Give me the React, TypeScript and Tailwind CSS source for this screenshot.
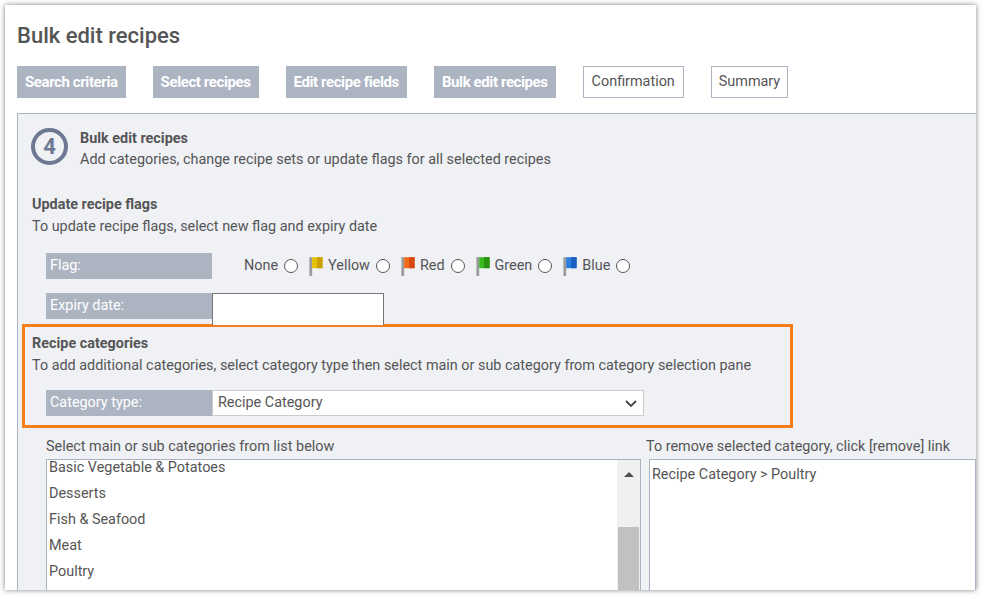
import React from "react";

const Flag = ({ c, d }: { c: string; d: string }) => (
  <svg width="18" height="22" viewBox="0 0 16 20" className="inline-block mr-[3px]">
    <rect x="2" y="2" width="2.5" height="17" fill="#9a9a9a" />
    <path d="M4.5 2 L14 2 L14 12 L4.5 12 Z" fill={c} />
    <path d="M9 2 L14 2 L14 12 L9 12 Z" fill={d} />
  </svg>
);

const Radio = () => (
  <span className="inline-block w-[14px] h-[14px] rounded-full border border-[#555] bg-white ml-[6px] mr-[9px] align-[-1px]" />
);

export default function App() {
  const tabs = ["Search criteria", "Select recipes", "Edit recipe fields", "Bulk edit recipes"];
  return (
    <div className="w-[984px] h-[599px] bg-white overflow-hidden text-[#555] text-[14.4px]" style={{ fontFamily: "Roboto, 'Liberation Sans', sans-serif" }}>
      <div className="ml-[5px] mt-[5px] w-[971px] h-[585px] bg-white shadow-[0_0_5px_rgba(0,0,0,0.5)] overflow-hidden pl-[12px]">
        <div className="text-[22px] font-medium pt-[17px] leading-[28px] text-[#555]">Bulk edit recipes</div>
        <div className="flex gap-[27px] mt-[16px] h-[32px]">
          {tabs.map((t) => (
            <div key={t} className="bg-[#acb4c2] text-white font-bold px-[8px] flex items-center text-[15px] tracking-[-0.4px]">{t}</div>
          ))}
          <div className="border border-[#acb4c2] px-[8px] flex items-center">Confirmation</div>
          <div className="border border-[#acb4c2] px-[7px] flex items-center">Summary</div>
        </div>
        <div className="mt-[15px] bg-[#eff1f5] border border-[#a9b2c3] border-r-0 h-[500px] relative">
          <div className="flex pl-[13px] pt-[14px]">
            <div className="w-[37px] h-[37px] rounded-full border-[4px] border-[#6d7893] flex items-center justify-center text-[#6d7893] font-bold text-[22px]">4</div>
            <div className="ml-[12px]">
              <div className="font-bold leading-[22px]">Bulk edit recipes</div>
              <div className="leading-[20px]">Add categories, change recipe sets or update flags for all selected recipes</div>
            </div>
          </div>
          <div className="pl-[14px] mt-[24px]">
            <div className="font-bold leading-[22px]">Update recipe flags</div>
            <div className="leading-[22px]">To update recipe flags, select new flag and expiry date</div>
          </div>
          <div className="flex items-center mt-[15px] ml-[28px] h-[26px]">
            <div className="w-[166px] h-[26px] bg-[#acb4c2] text-white flex items-center px-[4px]">Flag:</div>
            <div className="ml-[32px] flex items-center">
              None<Radio /><Flag c="#e6c200" d="#c9a000" />Yellow<Radio /><Flag c="#f26a1b" d="#d44a10" />Red<Radio />
              <Flag c="#3cb820" d="#2a9010" />Green<Radio /><Flag c="#2a7de0" d="#1a5fc0" />Blue<Radio />
            </div>
          </div>
          <div className="flex mt-[14px] ml-[28px] h-[32px]">
            <div className="w-[166px] h-[26px] bg-[#acb4c2] text-white flex items-center px-[4px]">Expiry date:</div>
            <div className="w-[172px] h-[32px] bg-white border border-[#777] border-b-0" />
          </div>
          <div className="ml-[4px] w-[771px] h-[104px] border-[3px] border-[#f47f1a] -mt-[1px] pl-[7px] pt-[6px]">
            <div className="font-bold leading-[22px]">Recipe categories</div>
            <div className="leading-[22px]">To add additional categories, select category type then select main or sub category from category selection pane</div>
            <div className="flex mt-[13px] ml-[14px] h-[26px]">
              <div className="w-[166px] h-[26px] bg-[#acb4c2] text-white flex items-center px-[4px]">Category type:</div>
              <div className="w-[432px] h-[26px] bg-white border border-[#ccc] flex items-center justify-between px-[5px]">
                <span>Recipe Category</span>
                <svg width="14" height="14" viewBox="0 0 14 14"><path d="M2 5 L7 10 L12 5" stroke="#444" strokeWidth="1.8" fill="none" /></svg>
              </div>
            </div>
          </div>
          <div className="flex ml-[28px] mt-[10px]">
            <div className="w-[595px]">
              <div className="leading-[18px]">Select main or sub categories from list below</div>
              <div className="mt-[3px] w-[595px] h-[140px] bg-white border border-[#a9b2c3] flex">
                <div className="flex-1 pl-[2px] pt-[1px]">
                  {["Basic Vegetable & Potatoes", "Desserts", "Fish & Seafood", "Meat", "Poultry"].map((s) => (
                    <div key={s} className="h-[26px] leading-[14px]">{s}</div>
                  ))}
                </div>
                <div className="w-[23px] bg-[#f0f0f0] flex flex-col items-center">
                  <svg width="12" height="12" viewBox="0 0 12 12" className="mt-[8px]"><path d="M1 9 L6 4 L11 9 Z" fill="#505050" /></svg>
                  <div className="w-[21px] h-[70px] bg-[#c1c1c1] mt-[47px]" />
                </div>
              </div>
            </div>
            <div className="ml-[5px] flex-1">
              <div className="leading-[18px]">To remove selected category, click [remove] link</div>
              <div className="mt-[3px] h-[140px] bg-white border border-[#a9b2c3] ml-[3px] pl-[2px] pt-[4px]">Recipe Category &gt; Poultry</div>
            </div>
          </div>
        </div>
      </div>
    </div>
  );
}
